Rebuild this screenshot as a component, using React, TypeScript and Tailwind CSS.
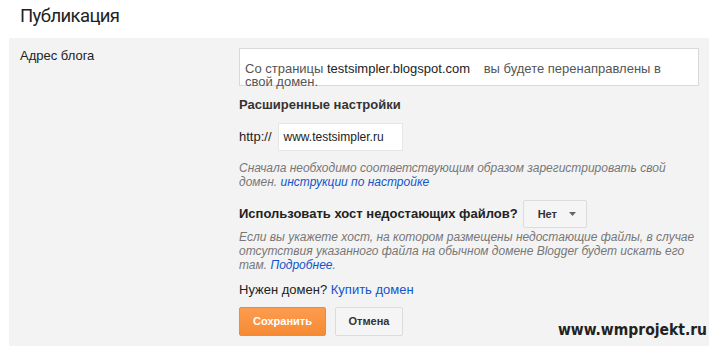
import React from "react";

export default function App() {
  const sans = { fontFamily: '"Liberation Sans", Arial, sans-serif' };
  return (
    <div
      className="relative w-[720px] h-[352px] bg-white overflow-hidden text-[#222]"
      style={sans}
    >
      <div className="h-[38px] pl-[20px] pt-[3px]">
        <h1
          className="text-[18.5px] leading-[26px] font-normal tracking-[-0.6px] text-[#222]"
          style={{ fontFamily: 'Roboto, "Liberation Sans", sans-serif' }}
        >
          Публикация
        </h1>
      </div>

      <div className="ml-[9px] w-[700px] h-[308px] bg-[#f3f3f3] flex pt-[10px]">
        <div className="w-[230px] pl-[11px] text-[13px] leading-[16px] text-[#222]">
          Адрес блога
        </div>

        <div className="w-[460px] flex flex-col">
          <div className="h-[38px] bg-white border border-[#d9d9d9] pl-[5px] pt-[12px] text-[13px] text-[#555]">
            <div className="leading-[16px] whitespace-nowrap">
              Со страницы <span className="text-[#222]">testsimpler.blogspot.com</span>
              <span className="inline-block w-[10px]" /> вы будете перенаправлены в
            </div>
            <div className="leading-[16px] -mt-[3px]">свой домен.</div>
          </div>

          <div className="mt-[11px] text-[13px] leading-[16px] font-bold text-[#333]">
            Расширенные настройки
          </div>

          <div className="mt-[10px] flex items-center gap-[6px]">
            <span className="text-[13px] text-[#222]">http://</span>
            <div className="w-[125px] h-[28px] bg-white border border-[#e6e6e6] flex items-center pl-[5px] text-[12px] text-[#222]">
              www.testsimpler.ru
            </div>
          </div>

          <p className="mt-[10px] text-[12px] leading-[14px] italic text-[#777]">
            Сначала необходимо соответствующим образом зарегистрировать свой домен.{" "}
            <a className="text-[#1155cc]">инструкции по настройке</a>
          </p>

          <div className="mt-[11px] flex items-center gap-[5px]">
            <span className="text-[13px] leading-[16px] font-bold text-[#222]">
              Использовать хост недостающих файлов?
            </span>
            <div className="w-[64px] h-[28px] rounded-[2px] border border-[#dcdcdc] bg-[#f5f5f5] flex items-center pl-[14px] gap-[12px] text-[11px] font-bold text-[#333]">
              <span>Нет</span>
              <svg width="7" height="4" viewBox="0 0 7 4">
                <path d="M0 0h7L3.5 4z" fill="#666" />
              </svg>
            </div>
          </div>

          <p className="mt-[2px] text-[12px] leading-[14px] italic text-[#777]">
            Если вы укажете хост, на котором размещены недостающие файлы, в случае
            отсутствия указанного файла на обычном домене Blogger будет искать его
            там. <a className="text-[#1155cc]">Подробнее</a>.
          </p>

          <div className="mt-[10px] text-[13px] leading-[16px] text-[#222]">
            Нужен домен? <a className="text-[#1155cc]">Купить домен</a>
          </div>

          <div className="mt-[9px] flex gap-[9px]">
            <button className="w-[87px] h-[29px] rounded-[2px] border border-[#f08a3a] bg-gradient-to-b from-[#fd9c4e] to-[#f68b33] text-white text-[11px] font-bold">
              Сохранить
            </button>
            <button className="w-[68px] h-[29px] rounded-[2px] border border-[#dcdcdc] bg-[#f5f5f5] text-[#333] text-[11px] font-bold">
              Отмена
            </button>
          </div>
        </div>
      </div>

      <div
        className="absolute right-[13px] top-[321px] text-[15.5px] leading-[18px] font-bold text-[#222]"
        style={{ fontFamily: '"DejaVu Sans Condensed", "DejaVu Sans", sans-serif' }}
      >
        www.wmprojekt.ru
      </div>
    </div>
  );
}
